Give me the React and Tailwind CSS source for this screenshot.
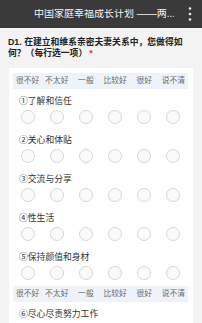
import React from "react";

const options = ["很不好", "不太好", "一般", "比较好", "很好", "说不清"];

function Band() {
  return (
    <div className="grid grid-cols-6 h-[16px] items-center bg-[#eef3fa] text-[7.8px] leading-none text-[#6b6b6b] text-center">
      {options.map((o) => (
        <span key={o}>{o}</span>
      ))}
    </div>
  );
}

function Item({ label }) {
  return (
    <div className="pt-[5px] pb-[4px]">
      <div className="h-[14px] pl-[6px] text-[8.8px] leading-[14px] text-[#333]">{label}</div>
      <div className="mt-[2px] grid grid-cols-6 h-[14px]">
        {options.map((o) => (
          <div key={o} className="flex justify-center">
            <div className="w-[14px] h-[14px] rounded-full border border-[#d6d6d6] bg-[#fafafa]" />
          </div>
        ))}
      </div>
    </div>
  );
}

export default function App() {
  return (
    <div className="w-[202px] h-[323px] overflow-hidden bg-[#f3f3f3] font-['Liberation_Sans','Noto_Sans_CJK_SC',sans-serif]">
      <div className="h-[28px] bg-[#3a3a3a] flex items-center">
        <div className="w-[34px] shrink-0" />
        <div className="flex-1 text-[10px] leading-none text-[#f2f2f2] whitespace-nowrap overflow-hidden">
          中国家庭幸福成长计划 ——两...
        </div>
        <div className="w-[28px] shrink-0 flex justify-center pl-[4px]">
          <svg width="4" height="16" viewBox="0 0 4 16">
            <circle cx="2" cy="2.5" r="1.3" fill="#eeeeee" />
            <circle cx="2" cy="8" r="1.3" fill="#eeeeee" />
            <circle cx="2" cy="13.5" r="1.3" fill="#eeeeee" />
          </svg>
        </div>
      </div>
      <div className="px-[8px] pt-[9px] pb-[9px] text-[8.8px] leading-[11px] font-bold text-[#222] whitespace-nowrap">
        <div>D1. 在建立和维系亲密夫妻关系中，您做得如</div>
        <div className="flex items-start">
          <span>何？（每行选一项）</span>
          <span className="ml-[2px] text-[#e53935]">*</span>
        </div>
      </div>
      <div className="mx-[9px] bg-white pl-[4px] pr-[5px] pt-[5px]">
        <Band />
        <Item label="①了解和信任" />
        <Item label="②关心和体贴" />
        <Item label="③交流与分享" />
        <Item label="④性生活" />
        <Item label="⑤保持颜值和身材" />
        <div className="mt-[2px]">
          <Band />
        </div>
        <Item label="⑥尽心尽责努力工作" />
      </div>
    </div>
  );
}
